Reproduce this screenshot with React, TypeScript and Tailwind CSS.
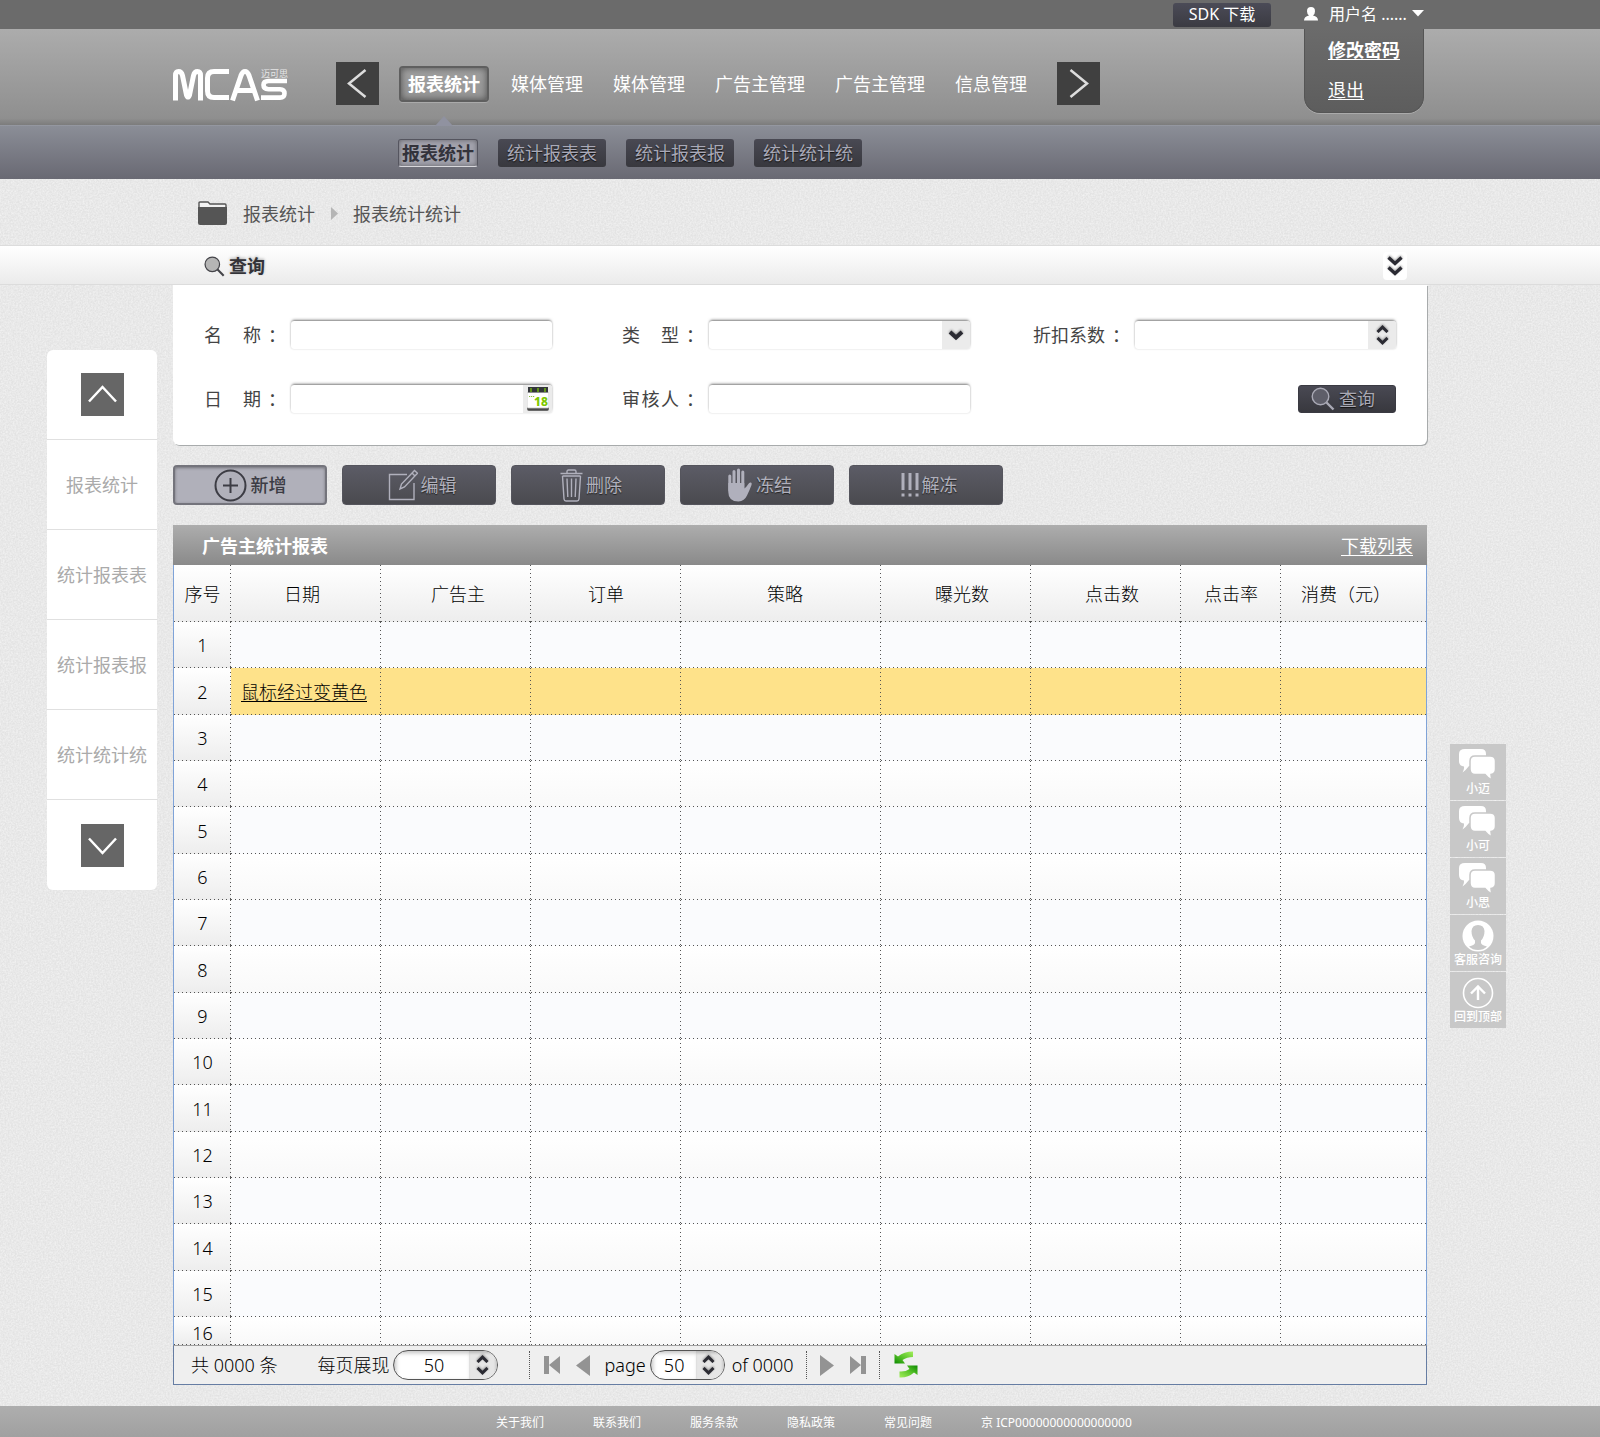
import React from "react";

const NAV = ["报表统计", "媒体管理", "媒体管理", "广告主管理", "广告主管理", "信息管理"];
const SUB_NAV = ["报表统计", "统计报表表", "统计报表报", "统计统计统"];
const SIDE_NAV = ["报表统计", "统计报表表", "统计报表报", "统计统计统"];
const FOOTER = ["关于我们", "联系我们", "服务条款", "隐私政策", "常见问题"];

const COLUMNS = [
  { title: "序号", col: "w-[57px]", cell: "text-center" },
  { title: "日期", col: "w-[150px]", cell: "text-center pr-2" },
  { title: "广告主", col: "w-[150px]", cell: "text-center pl-1" },
  { title: "订单", col: "w-[150px]", cell: "text-center" },
  { title: "策略", col: "w-[200px]", cell: "text-center pl-2" },
  { title: "曝光数", col: "w-[150px]", cell: "text-center pl-3" },
  { title: "点击数", col: "w-[150px]", cell: "text-center pl-3" },
  { title: "点击率", col: "w-[100px]", cell: "text-center" },
  { title: "消费（元）", col: "", cell: "text-left pl-5" },
];

const ROW_HEIGHTS = ["h-[46px]", "h-[47px]", "h-[46px]"];

const DOTTED =
  "bg-[repeating-linear-gradient(90deg,#555_0_1px,transparent_1px_4px),repeating-linear-gradient(#555_0_1px,transparent_1px_4px)] bg-[length:100%_1px,1px_100%] bg-[position:bottom,right] bg-no-repeat";
const DOTTED_LAST =
  "bg-[repeating-linear-gradient(90deg,#555_0_1px,transparent_1px_4px)] bg-[length:100%_1px] bg-bottom bg-no-repeat";
const SHADED =
  "bg-[repeating-linear-gradient(90deg,#555_0_1px,transparent_1px_4px),repeating-linear-gradient(#555_0_1px,transparent_1px_4px),linear-gradient(#ffffff,#ededed)] bg-[length:100%_1px,1px_100%,100%_100%] bg-[position:bottom,right,center] bg-no-repeat";
const SHADED_LAST =
  "bg-[repeating-linear-gradient(90deg,#555_0_1px,transparent_1px_4px),linear-gradient(#ffffff,#ededed)] bg-[length:100%_1px,100%_100%] bg-[position:bottom,center] bg-no-repeat";

const FIELD =
  "h-7 w-[261px] rounded-[3px] bg-white shadow-[0_-2px_3px_-1px_rgba(0,0,0,0.5),0_0_2px_rgba(0,0,0,0.2)]";

function Paper() {
  return (
    <svg className="absolute inset-0 -z-10 h-full w-full" aria-hidden="true">
      <filter id="grain" x="0" y="0" width="100%" height="100%">
        <feTurbulence type="fractalNoise" baseFrequency="0.6" numOctaves="2" seed="4" stitchTiles="stitch" />
        <feColorMatrix values="0 0 0 0 1  0 0 0 0 1  0 0 0 0 1  0.9 0 0 0 -0.25" />
      </filter>
      <rect width="100%" height="100%" fill="#e3e3e3" />
      <rect width="100%" height="100%" filter="url(#grain)" />
    </svg>
  );
}

function Logo() {
  return (
    <a href="#" aria-label="MCAs 迈可思" className="block">
      <svg width="115" height="32" viewBox="0 0 115 32" fill="none" stroke="#fff" strokeWidth="5" className="overflow-visible">
        <path d="M2.500 31.500V6.500Q2.500 2.500 5.500 2.500Q8.500 2.500 9.500 6.500L13.500 26Q15 30 16.500 26L20.500 6.500Q21.500 2.500 24.500 2.500Q27.500 2.500 27.500 6.500V31.500" />
        <path d="M56 2.500H41Q34.500 2.500 34.500 9V22Q34.500 28.500 41 28.500H56" />
        <path d="M59.500 31.500L68 6.500Q69.500 2.500 72 2.500Q74.500 2.500 76 6.500L84.500 31.500M63 21.500H81" />
        <path d="M114 12H95.500Q90.500 12 90.500 16T95.500 20.200H107Q111.500 20.200 111.500 24.400T107 28.600H88" strokeWidth="4.600" />
        <text x="88" y="8" fontSize="9" fill="#e6e6e6" stroke="none">迈可思</text>
      </svg>
    </a>
  );
}

function ThinChevron({ dir }: { dir: "left" | "right" | "up" | "down" }) {
  const d = {
    left: "M29.500 8L13 21.500L29.500 35",
    right: "M13.500 8L30 21.500L13.500 35",
    up: "M8 28.500L21.500 14L35 28.500",
    down: "M8 14.500L21.500 29L35 14.500",
  }[dir];
  return (
    <svg width="43" height="43" viewBox="0 0 43 43" fill="none" stroke="currentColor" strokeWidth="2.500" aria-hidden="true">
      <path d={d} />
    </svg>
  );
}

function Magnifier({ size, ring, glass }: { size: number; ring: string; glass: string }) {
  return (
    <svg width={size} height={size} viewBox="0 0 24 24" fill="none" aria-hidden="true">
      <circle cx="9.500" cy="9.500" r="8.300" fill={glass} stroke={ring} strokeWidth="1.400" />
      <path d="M15.500 15.500L22.500 22.500" stroke={ring} strokeWidth="2.400" />
    </svg>
  );
}

function Spinner({ label }: { label: string }) {
  return (
    <span className="flex flex-col justify-center gap-1 text-[#2b2b33] drop-shadow-[0_-1px_1px_rgba(0,0,0,0.35)]">
      <button type="button" aria-label={`${label} +`} className="block">
        <svg width="13" height="8" viewBox="0 0 13 8" fill="none" stroke="currentColor" strokeWidth="3" aria-hidden="true">
          <path d="M1.500 7L6.500 2.200L11.500 7" />
        </svg>
      </button>
      <button type="button" aria-label={`${label} -`} className="block">
        <svg width="13" height="8" viewBox="0 0 13 8" fill="none" stroke="currentColor" strokeWidth="3" aria-hidden="true">
          <path d="M1.500 1L6.500 5.800L11.500 1" />
        </svg>
      </button>
    </span>
  );
}

function CalendarIcon() {
  return (
    <svg width="22" height="24" viewBox="0 0 22 24" aria-hidden="true">
      <rect x="0" y="6" width="22" height="18" rx="2" fill="#8a8a8a" />
      <rect x="0.500" y="20" width="21" height="3.500" rx="1.500" fill="#4a4a4a" />
      <rect x="0" y="5" width="22" height="16" rx="1.500" fill="#fff" stroke="#c4c4c4" strokeWidth="0.800" />
      <rect x="1" y="0" width="20" height="5.500" fill="#33363a" />
      <path d="M4 1V5M11 1V5M18 1V5" stroke="#6cab12" strokeWidth="1.600" />
      <path d="M2 9.500H3.200M4 9.500H5.200M6 9.500H7.200" stroke="#8bbf3c" strokeWidth="1.200" />
      <text x="7" y="19" fontSize="12" fontWeight="800" fill="#7ec800">18</text>
    </svg>
  );
}

function Field({ id, chars, wide, children }: { id: string; chars: string; wide?: boolean; children: React.ReactNode }) {
  return (
    <div className="flex items-center">
      <label htmlFor={id} className="flex w-fit shrink-0">
        <span className={wide ? "flex w-[72px] justify-between" : "flex w-[57px] justify-between"}>
          {chars.split("").map((c) => (
            <span key={c}>{c}</span>
          ))}
        </span>
        <span className="w-[30px] pl-[7px]">：</span>
      </label>
      {children}
    </div>
  );
}

function SearchPanel() {
  return (
    <form
      onSubmit={(e) => e.preventDefault()}
      className="grid grid-cols-[418fr_411fr_363fr] gap-y-9 rounded-b-md bg-white px-[31px] pt-9 pb-8 text-lg leading-7 text-[#444] shadow-[1px_1px_0_#a8abac]"
    >
      <Field id="name" chars="名称">
        <input id="name" className={`${FIELD} px-2`} />
      </Field>
      <Field id="kind" chars="类型">
        <div className={`${FIELD} relative overflow-visible`}>
          <select id="kind" className="h-full w-full appearance-none bg-transparent px-2">
            <option></option>
          </select>
          <span className="pointer-events-none absolute inset-y-0 right-0 flex w-7 items-center justify-center rounded-r-[3px] bg-[#ebebeb] text-[#2b2b33]">
            <svg width="16" height="11" viewBox="0 0 16 11" fill="none" stroke="currentColor" strokeWidth="4" className="drop-shadow-[0_-1px_1px_rgba(0,0,0,0.35)]" aria-hidden="true">
              <path d="M2 2L8 7.500L14 2" />
            </svg>
          </span>
        </div>
      </Field>
      <Field id="rate" chars="折扣系数" wide>
        <div className={`${FIELD} flex`}>
          <input id="rate" className="min-w-0 flex-1 bg-transparent px-2" />
          <span className="flex w-7 justify-center rounded-r-[3px] bg-[#ebebeb]">
            <Spinner label="折扣系数" />
          </span>
        </div>
      </Field>
      <Field id="date" chars="日期">
        <div className={`${FIELD} flex`}>
          <input id="date" className="min-w-0 flex-1 bg-transparent px-2" />
          <button type="button" aria-label="选择日期" className="flex w-[29px] items-center justify-center rounded-r-[3px] bg-[#ebebeb]">
            <CalendarIcon />
          </button>
        </div>
      </Field>
      <Field id="auditor" chars="审核人">
        <input id="auditor" className={`${FIELD} px-2`} />
      </Field>
      <button
        type="submit"
        className="flex h-7 w-[98px] items-center gap-1 justify-self-end rounded-[3px] border border-[#3a3a42] bg-linear-to-b from-[#494953] to-[#38383e] pl-3 text-[#a9a9b5] text-shadow-[0_1px_1px_#111]"
      >
        <Magnifier size={24} ring="#a9a9b5" glass="#5e5e69" />
        查询
      </button>
    </form>
  );
}

const ACTIONS = [
  {
    title: "新增",
    icon: (
      <svg width="33" height="33" viewBox="0 0 33 33" fill="none" stroke="currentColor" strokeWidth="2" aria-hidden="true">
        <circle cx="16.500" cy="16.500" r="15" />
        <path d="M16.500 9V24M9 16.500H24" />
      </svg>
    ),
  },
  {
    title: "编辑",
    icon: (
      <svg width="30" height="33" viewBox="0 0 30 33" fill="none" stroke="currentColor" strokeWidth="1.400" aria-hidden="true">
        <path d="M19 5.500H1.500V30.500H26V14" />
        <path d="M12 20L13.500 15L26.500 1.500L29.500 4.200L16.500 18Z" />
        <path d="M24 4L27 7" />
      </svg>
    ),
  },
  {
    title: "删除",
    icon: (
      <svg width="23" height="33" viewBox="0 0 23 33" fill="none" stroke="currentColor" strokeWidth="1.400" aria-hidden="true">
        <path d="M0.500 4.500H22.500M7 4.500V2.500Q7 1 8.500 1H14.500Q16 1 16 2.500V4.500" />
        <path d="M2.500 7L4 30Q4.200 32 6 32H17Q18.800 32 19 30L20.500 7M2.500 7H20.500" />
        <path d="M7 9.500L7.800 28M11.500 9.500V28M16 9.500L15.200 28" />
      </svg>
    ),
  },
  {
    title: "冻结",
    icon: (
      <svg width="25" height="34" viewBox="0 0 25 34" aria-hidden="true">
        <g stroke="currentColor" strokeWidth="3" strokeLinecap="round">
          <path d="M1.800 8V22M6 3.500V20M10.500 2V20M14.800 4V20" />
        </g>
        <path d="M0.300 15H16.300V20.500Q18.500 19 20 16.500Q21.300 14 23 14.500Q24.200 15 23.500 17Q21.500 22.500 19 27.500Q16.500 33 10.500 33.500Q0.300 33.500 0.300 24Z" fill="currentColor" />
      </svg>
    ),
  },
  {
    title: "解冻",
    icon: (
      <svg width="18" height="24" viewBox="0 0 18 24" stroke="currentColor" strokeWidth="3" aria-hidden="true">
        <path d="M2 0V17M9 0V17M16 0V17M2 20.500V23.500M9 20.500V23.500M16 20.500V23.500" />
      </svg>
    ),
  },
];

function Actions() {
  return (
    <div className="flex gap-[15px] text-lg">
      {ACTIONS.map((a, i) => (
        <button
          key={a.title}
          type="button"
          className={
            i === 0
              ? "flex h-10 w-[154px] items-center justify-center gap-1 rounded border-2 border-[#74747c] bg-[#b0b0ba] text-[#3c3c44] shadow-[inset_0_1px_3px_rgba(0,0,0,0.35)]"
              : "flex h-10 w-[154px] items-center justify-center gap-[3px] rounded border border-[#55555d] bg-linear-to-b from-[#5c5c66] to-[#4a4a4f] pl-1.5 text-[#b0b0bc] text-shadow-[0_1px_1px_#222]"
          }
        >
          {a.icon}
          <span className={i === 0 ? "font-medium" : ""}>{a.title}</span>
        </button>
      ))}
    </div>
  );
}

function Report() {
  const last = COLUMNS.length - 1;
  return (
    <section>
      <div className="flex h-10 items-center justify-between bg-linear-to-b from-[#adadad] to-[#8a8a8a] pt-0.5 pr-[14px] pl-[29px] text-lg text-white">
        <h2 className="font-bold">广告主统计报表</h2>
        <a href="#" className="underline underline-offset-2">下载列表</a>
      </div>
      <div className="border-x border-[#7fa3d8] bg-white">
        <table className="w-full table-fixed border-separate border-spacing-0 text-lg leading-6 font-light text-black">
          <colgroup>
            {COLUMNS.map((c) => (
              <col key={c.title} className={c.col} />
            ))}
          </colgroup>
          <thead>
            <tr className="h-[57px]">
              {COLUMNS.map((c, i) => (
                <th key={c.title} scope="col" className={`${i === last ? SHADED_LAST : SHADED} ${c.cell} font-light`}>
                  {c.title}
                </th>
              ))}
            </tr>
          </thead>
          <tbody>
            {Array.from({ length: 16 }, (_, r) => (
              <tr
                key={r}
                className={`${r === 15 ? "h-7 align-bottom" : `${ROW_HEIGHTS[r % 3]} align-middle`} ${
                  r === 1 ? "bg-[#fee28a]" : r % 2 ? "bg-linear-to-b from-white to-[#f9f9f9]" : "bg-[#fafbfd]"
                }`}
              >
                {COLUMNS.map((c, i) =>
                  i === 0 ? (
                    <th key={c.title} scope="row" className={`${SHADED} p-0 text-center font-light`}>
                      {r + 1}
                    </th>
                  ) : (
                    <td key={c.title} className={`${i === last ? DOTTED_LAST : DOTTED} p-0 whitespace-nowrap`}>
                      {r === 1 && i === 1 ? (
                        <a href="#" className="pl-[10px] underline underline-offset-2">鼠标经过变黄色</a>
                      ) : null}
                    </td>
                  ),
                )}
              </tr>
            ))}
          </tbody>
        </table>
      </div>
      <Pager />
    </section>
  );
}

function Pill({ label, wide }: { label: string; wide?: boolean }) {
  return (
    <span
      className={`flex h-[30px] overflow-hidden rounded-full border border-[#555] bg-white ${
        wide ? "w-[105px]" : "w-[75px]"
      }`}
    >
      <input
        aria-label={label}
        defaultValue="50"
        className={`min-w-0 flex-1 text-center shadow-[inset_2px_2px_4px_rgba(0,0,0,0.25)] ${wide ? "pl-1" : "pl-0.5"}`}
      />
      <span className="flex w-7 justify-center bg-[#e6e6e6] pr-0.5 shadow-[inset_-1px_2px_3px_rgba(0,0,0,0.2)]">
        <Spinner label={label} />
      </span>
    </span>
  );
}

function Divider() {
  return <span className="h-7 border-l border-dotted border-[#555]" />;
}

function Pager() {
  return (
    <div className="flex h-10 items-center border border-t-[#a0a0a0] border-[#667da3] bg-[#efefef] pl-[17px] text-lg font-light text-black">
      <span>共 0000 条</span>
      <span className="ml-10 mr-1">每页展现</span>
      <Pill label="每页展现" wide />
      <span className="w-[31px]" />
      <Divider />
      <div className="flex items-center gap-4 px-[14px] text-[#939393]">
        <button type="button" aria-label="第一页">
          <svg width="16" height="18" viewBox="0 0 16 18" fill="currentColor" aria-hidden="true">
            <path d="M0 0H5V18H0ZM16 0V18L5 9Z" />
          </svg>
        </button>
        <button type="button" aria-label="上一页">
          <svg width="14" height="21" viewBox="0 0 14 21" fill="currentColor" aria-hidden="true">
            <path d="M14 0V21L0 10.500Z" />
          </svg>
        </button>
      </div>
      <span className="mr-1">page</span>
      <Pill label="page" />
      <span className="ml-[7px] mr-3">of 0000</span>
      <Divider />
      <div className="flex items-center gap-4 px-[13px] text-[#939393]">
        <button type="button" aria-label="下一页">
          <svg width="14" height="21" viewBox="0 0 14 21" fill="currentColor" aria-hidden="true">
            <path d="M0 0V21L14 10.500Z" />
          </svg>
        </button>
        <button type="button" aria-label="最后一页">
          <svg width="16" height="18" viewBox="0 0 16 18" fill="currentColor" aria-hidden="true">
            <path d="M11 0H16V18H11ZM0 0V18L11 9Z" />
          </svg>
        </button>
      </div>
      <Divider />
      <button type="button" aria-label="刷新" className="mb-0.5 ml-[14px]">
        <svg width="24" height="27" viewBox="0 0 24 27" aria-hidden="true">
          <defs>
            <linearGradient id="leafA" x1="1" y1="0" x2="0" y2="1">
              <stop offset="0" stopColor="#a4ee5c" />
              <stop offset="0.500" stopColor="#5cc62c" />
              <stop offset="1" stopColor="#0d8a00" />
            </linearGradient>
            <linearGradient id="leafB" x1="0" y1="1" x2="1" y2="0">
              <stop offset="0" stopColor="#a4ee5c" />
              <stop offset="0.500" stopColor="#5cc62c" />
              <stop offset="1" stopColor="#0d8a00" />
            </linearGradient>
          </defs>
          <path d="M19 0.500V6Q13 6 8.500 9L11 12.500H0.500V3L4 5.500Q10 0.500 19 0.500Z" fill="url(#leafA)" />
          <path d="M5.500 26.500V20.500Q11.500 21 15.500 18L13 14.500H23.500V24L20 21.500Q14 27 5.500 26.500Z" fill="url(#leafB)" />
        </svg>
      </button>
    </div>
  );
}

function Bubbles() {
  return (
    <svg width="38" height="32" viewBox="0 0 38 32" aria-hidden="true">
      <path d="M6 0H22Q27 0 27 5V12Q27 17 22 17H10Q7 21 3.500 23.500Q5.500 20 5 17.500Q0 17 0 12V5Q0 0 6 0Z" fill="#fff" />
      <path d="M16 7H31Q36.500 7 36.500 12V20Q36.500 25 32 25.500Q32 28.500 33.500 31.500Q29 29.500 26 25.500H16Q11 25.500 11 20V12Q11 7 16 7Z" fill="#fff" stroke="#c8c8c8" strokeWidth="1.500" />
    </svg>
  );
}

function AgentIcon() {
  return (
    <svg width="32" height="32" viewBox="0 0 32 32" aria-hidden="true">
      <circle cx="16" cy="16" r="15.500" fill="#fff" />
      <path d="M16 5Q22 5 22.500 11Q22.500 17 19 20.500V23Q19.500 25 25 26.500Q21.500 30 16 30T7 26.500Q12.500 25 13 23V20.500Q9.500 17 9.500 11Q10 5 16 5Z" fill="#c8c8c8" />
    </svg>
  );
}

function TopIcon() {
  return (
    <svg width="32" height="32" viewBox="0 0 32 32" fill="none" stroke="#fff" aria-hidden="true">
      <circle cx="16" cy="16" r="14.500" strokeWidth="1.600" />
      <path d="M16 23V9.500M9 16.500L16 9.500L23 16.500" strokeWidth="2.400" />
    </svg>
  );
}

const CONTACTS = [
  { title: "小迈", icon: <Bubbles /> },
  { title: "小可", icon: <Bubbles /> },
  { title: "小思", icon: <Bubbles /> },
  { title: "客服咨询", icon: <AgentIcon /> },
  { title: "回到顶部", icon: <TopIcon /> },
];

function Header() {
  return (
    <header>
      <div className="relative flex h-[29px] items-center justify-end bg-[#6b6b6b] pr-44 text-base text-white">
        <a
          href="#"
          className="mr-[33px] flex h-6 w-[98px] items-center justify-center rounded-[3px] bg-linear-to-b from-[#4b4b57] to-[#3b3b42] pb-0.5"
        >
          SDK 下载
        </a>
        <button type="button" aria-expanded="true" className="flex w-[120px] items-center pb-0.5 leading-6">
          <svg width="14" height="14" viewBox="0 0 14 14" fill="#fff" aria-hidden="true">
            <path d="M7 0Q11 0 11 4.200Q11 7 9 8.600Q14 9.800 14 13.500H0Q0 9.800 5 8.600Q3 7 3 4.200Q3 0 7 0Z" />
          </svg>
          <span className="ml-[11px]">用户名 ......</span>
          <svg width="12" height="7" viewBox="0 0 12 7" fill="#fff" className="ml-auto" aria-hidden="true">
            <path d="M0 0H12L6 6.500Z" />
          </svg>
        </button>
        <div className="absolute top-full right-44 z-10 flex h-[84px] w-[120px] flex-col gap-3 rounded-b-2xl border border-t-0 border-[#555] bg-linear-to-b from-[#6b6b6b] to-[#5d5d5d] pt-[7px] pl-[23px] text-lg shadow-[0_1px_0_#aaa]">
          <a href="#" className="font-bold underline underline-offset-2">修改密码</a>
          <a href="#" className="underline underline-offset-2">退出</a>
        </div>
      </div>
      <div className="flex h-24 items-center bg-[linear-gradient(#acacac,#8f8f8f_93%,#7c7c7c)] pt-[13px] pl-[173px] text-lg text-white">
        <div className="w-[163px] pt-[3px]">
          <Logo />
        </div>
        <button type="button" aria-label="上一组" className="bg-[#404040] text-[#ddd]">
          <ThinChevron dir="left" />
        </button>
        <nav className="mx-5 flex gap-[10px]">
          {NAV.map((n, i) =>
            i === 0 ? (
              <span key={i} className="relative mr-0.5">
                <a href="#" className="flex h-9 items-center rounded border-2 border-[#5f5f5f] px-[7px] font-bold shadow-[inset_0_0_7px_rgba(0,0,0,0.5),0_1px_0_#aaa]">
                  {n}
                </a>
                <svg width="18" height="10" viewBox="0 0 18 10" className="absolute top-[50px] left-9" aria-hidden="true">
                  <path d="M0 10L9 0L18 10Z" fill="#9092a0" />
                </svg>
              </span>
            ) : (
              <a key={i} href="#" className="flex h-9 items-center px-[10px]">
                {n}
              </a>
            ),
          )}
        </nav>
        <button type="button" aria-label="下一组" className="bg-[#404040] text-[#ddd]">
          <ThinChevron dir="right" />
        </button>
      </div>
      <nav className="flex h-[54px] items-start gap-5 border-t border-[#9497a0] bg-linear-to-b from-[#8b8e97] to-[#696973] pt-[13px] pl-[398px] text-lg">
        {SUB_NAV.map((n, i) => (
          <a
            key={n}
            href="#"
            className={
              i === 0
                ? "flex h-7 items-center rounded-[3px] border border-[#55555f] border-b-[#d8d8dc] bg-[#a2a2ac] px-[3px] font-bold text-[#33333b] shadow-[inset_0_0_5px_rgba(0,0,0,0.4)]"
                : "flex h-7 w-[108px] items-center justify-center rounded-[3px] bg-linear-to-b from-[#494953] to-[#38383e] text-[#a9a9b8] text-shadow-[0_1px_1px_#111]"
            }
          >
            {n}
          </a>
        ))}
      </nav>
    </header>
  );
}

export default function App() {
  return (
    <div className="relative isolate flex min-h-screen flex-col font-['Noto_Sans','Noto_Sans_CJK_SC',sans-serif]">
      <Paper />
      <Header />
      <nav aria-label="面包屑" className="flex h-[66px] items-center pt-[3px] pl-[198px] text-lg text-[#555]">
        <svg width="29" height="24" viewBox="0 0 29 24" className="mb-0.5" aria-hidden="true">
          <path d="M1 22V2Q1 1 2 1H10L12 3H27Q28 3 28 4V22" fill="#f2f2f2" stroke="#555" strokeWidth="1.400" />
          <path d="M0 6H29V22Q29 24 27 24H2Q0 24 0 22Z" fill="#555" />
        </svg>
        <a href="#" className="ml-4">报表统计</a>
        <svg width="7" height="13" viewBox="0 0 7 13" className="mr-[15px] ml-4 fill-[#b5b5b5]" aria-hidden="true">
          <path d="M0 0L7 6.500L0 13Z" />
        </svg>
        <a href="#">报表统计统计</a>
      </nav>
      <div className="flex h-10 items-center border-y border-[#dcdcdc] bg-linear-to-b from-white to-[#ebebeb] pt-0.5 pr-[193px] pl-[204px] text-lg text-[#333338]">
        <Magnifier size={21} ring="#444449" glass="#b5b5b5" />
        <h1 className="ml-1 font-bold text-shadow-[0_-1px_3px_rgba(0,0,0,0.3)]">查询</h1>
        <button type="button" aria-label="展开" className="ml-auto flex h-7 w-6 items-center justify-center rounded bg-white">
          <svg width="16" height="22" viewBox="0 0 16 22" fill="none" stroke="#2b2b33" strokeWidth="3.400" className="drop-shadow-[0_-1px_1px_rgba(0,0,0,0.35)]" aria-hidden="true">
            <path d="M1.500 2.500L8 8.500L14.500 2.500M1.500 12.500L8 18.500L14.500 12.500" />
          </svg>
        </button>
      </div>
      <div className="flex items-start pr-[94px] pl-[47px]">
        <nav aria-label="侧栏" className="mt-[65px] mr-4 w-[110px] shrink-0 divide-y divide-[#e0e0e0] rounded-md bg-white text-lg text-[#aaa]">
          <div className="flex h-[90px] items-center justify-center">
            <button type="button" aria-label="向上" className="bg-[#666] text-white">
              <ThinChevron dir="up" />
            </button>
          </div>
          {SIDE_NAV.map((n) => (
            <a key={n} href="#" className="flex h-[90px] items-center justify-center">
              {n}
            </a>
          ))}
          <div className="flex h-[90px] items-center justify-center">
            <button type="button" aria-label="向下" className="bg-[#666] text-white">
              <ThinChevron dir="down" />
            </button>
          </div>
        </nav>
        <main className="flex min-w-0 flex-1 flex-col gap-5">
          <SearchPanel />
          <Actions />
          <Report />
        </main>
        <aside className="mt-[459px] ml-[23px] flex w-14 shrink-0 flex-col gap-px text-xs leading-4 text-white">
          {CONTACTS.map((c) => (
            <a key={c.title} href="#" className="flex h-14 flex-col items-center bg-[#c8c8c8] pt-[5px]">
              {c.icon}
              <span className="font-medium">{c.title}</span>
            </a>
          ))}
        </aside>
      </div>
      <footer className="mt-auto flex h-[31px] items-center gap-[49px] bg-linear-to-b from-[#aeaeae] to-[#a0a0a0] pt-[3px] pl-[496px] text-xs text-white">
        {FOOTER.map((f) => (
          <a key={f} href="#">
            {f}
          </a>
        ))}
        <span>京 ICP00000000000000000</span>
      </footer>
    </div>
  );
}
